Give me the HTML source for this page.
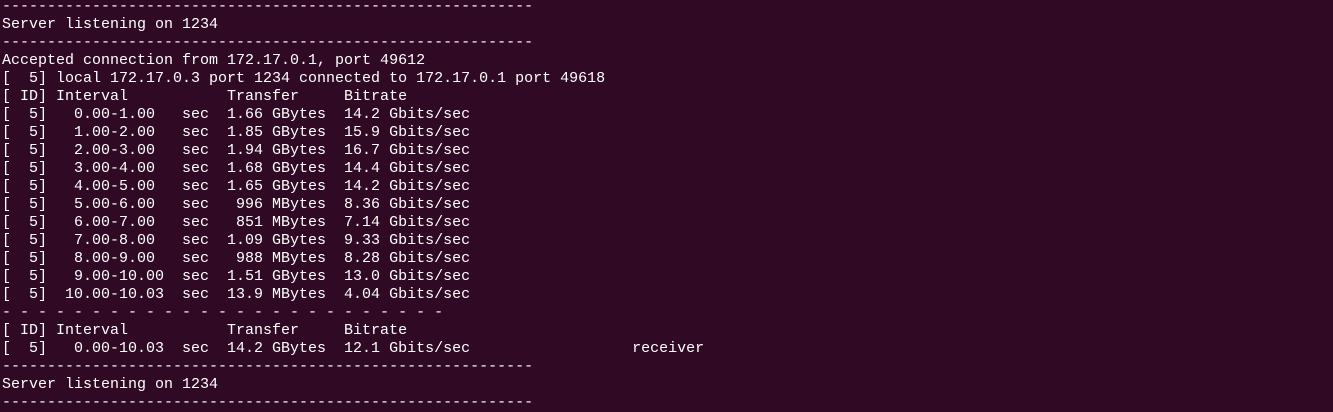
<!DOCTYPE html><html><head><style>
html,body{margin:0;padding:0;background:#300a24;width:1333px;height:408px;overflow:hidden}
pre{margin:0;position:absolute;left:2px;top:-2px;font-family:"Liberation Mono",monospace;font-size:15px;line-height:18px;color:#ffffff;letter-spacing:0}
</style></head><body><pre>-----------------------------------------------------------
Server listening on 1234
-----------------------------------------------------------
Accepted connection from 172.17.0.1, port 49612
[  5] local 172.17.0.3 port 1234 connected to 172.17.0.1 port 49618
[ ID] Interval           Transfer     Bitrate
[  5]   0.00-1.00   sec  1.66 GBytes  14.2 Gbits/sec
[  5]   1.00-2.00   sec  1.85 GBytes  15.9 Gbits/sec
[  5]   2.00-3.00   sec  1.94 GBytes  16.7 Gbits/sec
[  5]   3.00-4.00   sec  1.68 GBytes  14.4 Gbits/sec
[  5]   4.00-5.00   sec  1.65 GBytes  14.2 Gbits/sec
[  5]   5.00-6.00   sec   996 MBytes  8.36 Gbits/sec
[  5]   6.00-7.00   sec   851 MBytes  7.14 Gbits/sec
[  5]   7.00-8.00   sec  1.09 GBytes  9.33 Gbits/sec
[  5]   8.00-9.00   sec   988 MBytes  8.28 Gbits/sec
[  5]   9.00-10.00  sec  1.51 GBytes  13.0 Gbits/sec
[  5]  10.00-10.03  sec  13.9 MBytes  4.04 Gbits/sec
- - - - - - - - - - - - - - - - - - - - - - - - -
[ ID] Interval           Transfer     Bitrate
[  5]   0.00-10.03  sec  14.2 GBytes  12.1 Gbits/sec                  receiver
-----------------------------------------------------------
Server listening on 1234
-----------------------------------------------------------
</pre></body></html>
